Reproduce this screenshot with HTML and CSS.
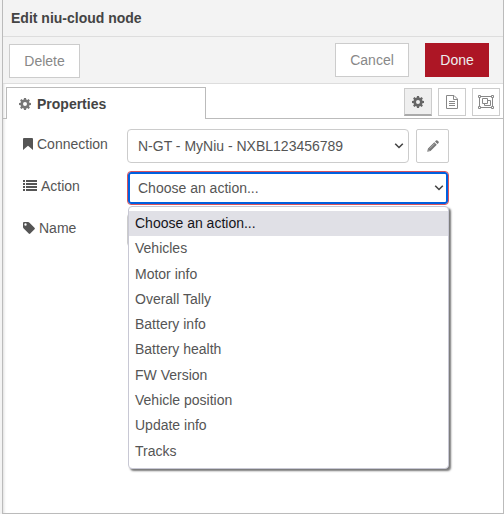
FILE: index.html
```html
<!DOCTYPE html>
<html lang="en">
<head>
<meta charset="utf-8">
<title>Edit niu-cloud node</title>
<link rel="stylesheet" href="styles.css">
</head>
<body>
<svg width="0" height="0" class="defs">
  <symbol id="gear" viewBox="0 0 12 12"><path fill-rule="evenodd" d="M5 0h2l.3 1.6 1 .4L9.600 1.100 10.900 2.400 10 3.700l.4 1L12 5v2l-1.600.3-.4 1 .9 1.300-1.300 1.300L8.300 10l-1 .4L7 12H5l-.3-1.600-1-.4-1.300.9L1.100 9.600 2 8.300l-.4-1L0 7V5l1.600-.3.4-1L1.100 2.400 2.400 1.100 3.700 2l1-.4zM6 4a2 2 0 1 0 0 4 2 2 0 0 0 0-4z"/></symbol>
</svg>
<div class="tray">
  <div class="title">Edit niu-cloud node</div>
  <div class="toolbar">
    <button class="btn delete">Delete</button>
    <button class="btn cancel">Cancel</button>
    <button class="btn done">Done</button>
  </div>
  <div class="tabs">
    <div class="tab"><svg class="gear" width="12" height="12"><use href="#gear"/></svg><span>Properties</span></div>
    <div class="tab-buttons">
      <button class="tool active"><svg width="12" height="12"><use href="#gear"/></svg></button>
      <button class="tool"><svg width="12" height="14" viewBox="0 0 12 14"><path d="M.5.5h7.500l3.500 3.500v9.500H.5zM7.500.5v4h4M3 6.500h6M3 8.500h6M3 10.500h6" fill="none" stroke="currentColor"/></svg></button>
      <button class="tool"><svg width="16" height="14" viewBox="0 0 16 14"><path d="M1.500 2v10M14.500 2v10M2 1.500h12M2 12.500h12M4.500 3.500h5v5h-5zM10 5.500h2.500v5h-6V9" fill="none" stroke="currentColor"/><path d="M.5.5h2v2h-2zM13.500.5h2v2h-2zM.5 11.500h2v2h-2zM13.500 11.500h2v2h-2z" fill="#fff" stroke="currentColor"/></svg></button>
    </div>
  </div>
  <div class="form">
    <div class="row">
      <label class="label"><svg width="10" height="12" viewBox="0 0 10 12"><path d="M0 1q0-1 1-1h8q1 0 1 1v11L5 7.700 0 12z"/></svg><span>Connection</span></label>
      <div class="select connection"><span>N-GT - MyNiu - NXBL123456789</span><svg class="chev" width="10" height="6" viewBox="0 0 10 6"><path d="M1.200.8 5 4.500 8.800.8"/></svg></div>
      <button class="edit"><svg width="12" height="12" viewBox="0 0 12 12"><path d="M.2 11.800 1 8.500 7.300 2.200 9.800 4.700 3.500 11zM8 1.500l1-1q.7-.7 1.400 0l1.100 1.100q.7.700 0 1.400l-1 1z"/><path d="m2.700 8.600 5-5M1 9.500l1.500 1.500" stroke="#ccc" stroke-width=".7"/></svg></button>
    </div>
    <div class="row">
      <label class="label"><svg width="14" height="12" viewBox="0 0 14 12"><path d="M0 0h2v2H0zM3 0h11v2H3zM0 3h2v2H0zM3 3h11v2H3zM0 6h2v2H0zM3 6h11v2H3zM0 9h2v2H0zM3 9h11v2H3z"/></svg><span>Action</span></label>
      <div class="select action"><span>Choose an action...</span><svg class="chev" width="10" height="6" viewBox="0 0 10 6"><path d="M1.200.8 5 4.500 8.800.8"/></svg>
        <div class="menu">
          <div class="option selected">Choose an action...</div>
          <div class="option">Vehicles</div>
          <div class="option">Motor info</div>
          <div class="option">Overall Tally</div>
          <div class="option">Battery info</div>
          <div class="option">Battery health</div>
          <div class="option">FW Version</div>
          <div class="option">Vehicle position</div>
          <div class="option">Update info</div>
          <div class="option">Tracks</div>
        </div>
      </div>
    </div>
    <div class="row name-row">
      <label class="label"><svg width="12" height="12" viewBox="0 0 12 12"><path fill-rule="evenodd" d="M0 1q0-1 1-1h4q.8 0 1.500.7l5 5q.8.8 0 1.600L7.300 11.500q-.8.8-1.600 0l-5-5Q0 5.800 0 5zM2.500 1.300a1.200 1.200 0 1 0 0 2.400 1.200 1.200 0 0 0 0-2.400z"/></svg><span>Name</span></label>
      <div class="input"></div>
    </div>
  </div>
</div>
</body>
</html>
```
FILE: styles.css
```css
* { box-sizing: border-box; }
body {
  margin: 0;
  height: 514px;
  padding-left: 2px;
  background: #f3f3f3;
  font: 14px/20px "Liberation Sans", Arial, sans-serif;
  color: #555;
  overflow: hidden;
}
button { font: inherit; margin: 0; padding: 0; }
svg { display: block; fill: currentColor; flex: none; }
.defs { position: absolute; }
.tray {
  height: 514px;
  border: 1px solid #bbb;
  border-top: 0;
  background: #fff;
  box-shadow: inset 3px 0 3px -2px #ddd;
}
.title {
  height: 37px;
  padding: 8px 8px 0;
  border-bottom: 1px solid #ddd;
  background: #f3f3f3;
  font-weight: bold;
  color: #444;
}
.toolbar {
  display: flex;
  height: 47px;
  padding: 6px 14px 0 6px;
  border-bottom: 1px solid #ddd;
  background: #f3f3f3;
}
.btn {
  height: 34px;
  border: 1px solid #ccc;
  background: #fff;
  color: #888;
}
.delete { width: 71px; margin: 1px auto 0 0; }
.cancel { width: 74px; margin-right: 16px; }
.done { width: 64px; border-color: #ad1625; background: #ad1625; color: #eee; }
.tabs {
  display: flex;
  justify-content: space-between;
  height: 35px;
  padding: 3px 3px 0;
  border-bottom: 1px solid #bbb;
}
.tab {
  display: flex;
  align-items: center;
  gap: 6px;
  width: 200px;
  height: 32px;
  padding-left: 12px;
  border: 1px solid #bbb;
  border-bottom: 0;
  background: #fff;
  font-weight: bold;
  color: #444;
}
.gear { color: #777; }
.tab-buttons { display: flex; gap: 6px; padding-top: 1px; }
.tool {
  display: flex;
  align-items: center;
  justify-content: center;
  width: 28px;
  height: 28px;
  border: 1px solid #ccc;
  background: #fff;
  color: #888;
}
.active { border-bottom: 2px solid #aaa; background: #efefef; color: #666; }
.form { padding: 10px 0 0 20px; }
.row { display: flex; height: 34px; margin-bottom: 8px; }
.label { display: flex; align-items: center; gap: 4px; width: 104px; height: 30px; }
.select {
  position: relative;
  display: flex;
  align-items: center;
  justify-content: space-between;
  height: 34px;
  border: 1px solid #ccc;
  border-radius: 4px;
  padding: 0 4px 0 10px;
  background: #fff;
}
.connection { width: 282px; }
.chev path { fill: none; stroke: #444; stroke-width: 1.6; }
.action { width: 322px; border-color: #d9545c; box-shadow: inset 0 0 0 2px #0060df; }
.edit {
  display: flex;
  align-items: center;
  justify-content: center;
  width: 33px;
  height: 34px;
  margin-left: 7px;
  border: 1px solid #ccc;
  border-radius: 2px;
  background: #fff;
  color: #777;
}
.menu {
  position: absolute;
  top: 34px;
  left: 0;
  width: 321px;
  height: 263px;
  padding: 4px 0;
  border: 1px solid #c8c8d4;
  border-radius: 4px;
  background: #fff;
  box-shadow: 2px 2px 2px #777;
}
.option { height: 25.3px; padding-left: 6px; line-height: 25.3px; }
.selected { background: #e0e0e6; color: #15141a; }
.input { width: 322px; height: 34px; border: 1px solid #ccc; border-radius: 4px; }
```
